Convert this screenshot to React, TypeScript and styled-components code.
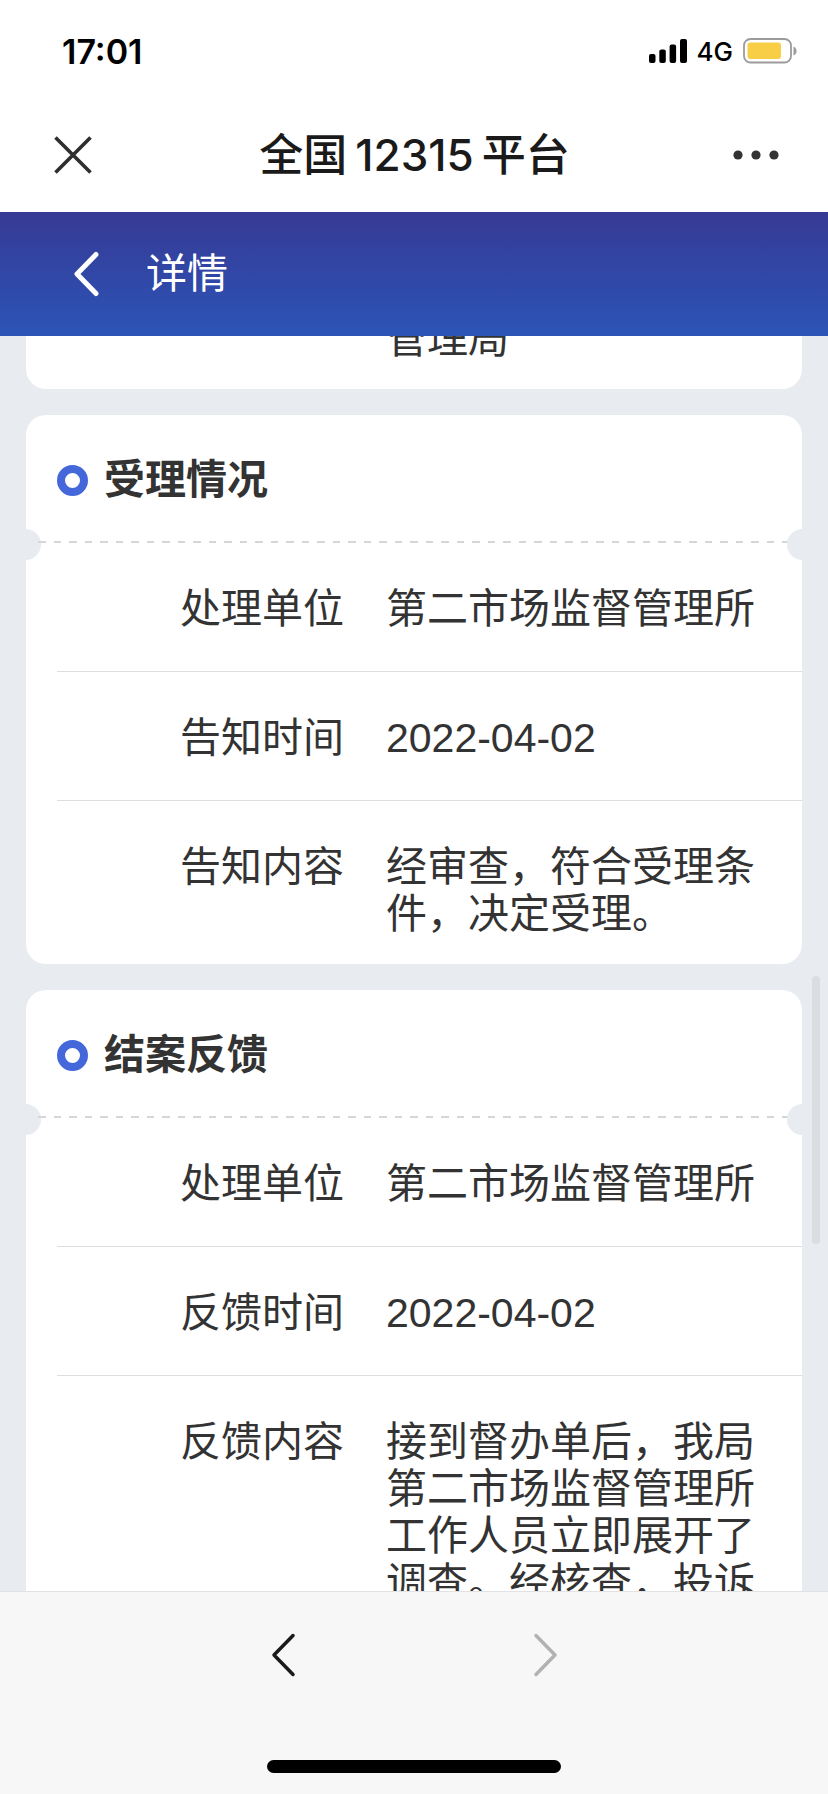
import React from "react";
import styled, { createGlobalStyle } from "styled-components";

const GlobalStyle = createGlobalStyle`
  *, *::before, *::after { box-sizing: border-box; }
  body {
    margin: 0;
    background: #e8ebf0;
    color: #333;
    font-family: "Liberation Sans", "Noto Sans CJK SC", sans-serif;
    font-size: 41px;
    line-height: 47px;
  }
  h1, h2, dl, dt, dd { margin: 0; font-size: inherit; }
`;

const Screen = styled.div`
  display: flex;
  flex-direction: column;
  height: 100vh;
`;

const StatusBar = styled.div`
  flex: none;
  display: flex;
  align-items: center;
  justify-content: space-between;
  height: 98px;
  padding: 4px 31px 0 62px;
  background: #fff;
  color: #000;
  font-family: Inter, sans-serif;
`;

const Clock = styled.time`
  font-size: 34px;
  font-weight: 600;
`;

const Indicators = styled.div`
  display: flex;
  align-items: center;
  gap: 10px;
  font-size: 26px;
  font-weight: 500;
`;

const AppBar = styled.header`
  flex: none;
  display: flex;
  align-items: center;
  justify-content: space-between;
  height: 114px;
  padding: 0 32px 0 33px;
  background: #fff;
`;

const AppTitle = styled.h1`
  display: flex;
  gap: 8px;
  color: #1a1a1a;
  font-family: Inter, "Noto Sans CJK SC", sans-serif;
  font-size: 44px;
  font-weight: 500;
`;

const IconButton = styled.button`
  display: flex;
  align-items: center;
  justify-content: center;
  width: 80px;
  height: 80px;
  padding: 0;
  border: 0;
  background: none;
`;

const PageBar = styled.div`
  flex: none;
  display: flex;
  align-items: center;
  gap: 20px;
  height: 124px;
  padding: 0 46px;
  background: linear-gradient(#373a95, #2b54b7);
  color: #fff;
`;

const PageTitle = styled.h2`
  font-weight: 400;
`;

const Viewport = styled.main`
  position: relative;
  flex: 1;
  min-height: 0;
  overflow: hidden;
`;

const Feed = styled.div`
  display: flex;
  flex-direction: column;
  gap: 26px;
  margin-top: -63px;
  padding: 0 26px;
`;

const Card = styled.section`
  padding-bottom: 26px;
  border-radius: 20px;
  background: #fff;
`;

const CardHeader = styled.header`
  position: relative;
  display: flex;
  align-items: center;
  gap: 16px;
  height: 128px;
  padding: 2px 31px 0;

  &::before, &::after {
    content: "";
    position: absolute;
    bottom: -17px;
    width: 31px;
    height: 31px;
    border-radius: 50%;
    background: #e8ebf0;
  }
  &::before { left: -16px; }
  &::after { right: -16px; }
`;

const Perforation = styled.span`
  position: absolute;
  right: 12px;
  bottom: 0;
  left: 12px;
  height: 2px;
  background: repeating-linear-gradient(
    90deg,
    #d3d7db 0 8px, transparent 8px 16px,
    #d3d7db 16px 23px, transparent 23px 31px
  );
`;

const Ring = styled.span`
  width: 31px;
  height: 31px;
  border: 8px solid #4468da;
  border-radius: 50%;
`;

const CardTitle = styled.h2`
  font-weight: 700;
`;

const Fields = styled.dl`
  margin-left: 31px;
`;

const Row = styled.div`
  display: grid;
  grid-template-columns: 287px 1fr;
  gap: 42px;
  padding: 43px 40px 0 0;

  &:not(:last-child) {
    padding-bottom: 38px;
    border-bottom: 1px solid #dcdee0;
  }
`;

const Label = styled.dt`
  text-align: right;
`;

const Value = styled.dd`
  min-width: 0;
`;

const ScrollThumb = styled.div`
  position: absolute;
  top: 51%;
  right: 8px;
  width: 8px;
  height: 268px;
  border-radius: 4px;
  background: #dcdde0;
`;

const BottomBar = styled.footer`
  flex: none;
  display: flex;
  flex-direction: column;
  align-items: center;
  gap: 65px;
  padding: 23px 0 21px;
  border-top: 1px solid #e2e2e4;
  background: #f7f7f7;
`;

const History = styled.nav`
  display: flex;
  gap: 182px;
`;

const HomeIndicator = styled.div`
  width: 294px;
  height: 13px;
  border-radius: 7px;
  background: #000;
`;

type Field = { label: string; value: string };

function Chevron({ color, width, flip }: { color: string; width: number; flip?: boolean }) {
  return (
    <svg width="26" height="46" viewBox="0 0 26 46" fill="none" stroke={color} strokeWidth={width} strokeLinecap="round" strokeLinejoin="round" aria-hidden="true">
      <path d={flip ? "M4 3.5 23 23 4 42.5" : "M23 3.5 4 23l19 19.5"} />
    </svg>
  );
}

function DetailCard({ title, fields }: { title?: string; fields: Field[] }) {
  return (
    <Card>
      {title && (
        <CardHeader>
          <Ring />
          <CardTitle>{title}</CardTitle>
          <Perforation />
        </CardHeader>
      )}
      <Fields>
        {fields.map((f) => (
          <Row key={f.value}>
            <Label>{f.label}</Label>
            <Value>{f.value}</Value>
          </Row>
        ))}
      </Fields>
    </Card>
  );
}

export default function App() {
  return (
    <Screen>
      <GlobalStyle />
      <StatusBar>
        <Clock>17:01</Clock>
        <Indicators>
          <svg width="38" height="24" viewBox="0 0 38 24" aria-hidden="true">
            <rect x="0" y="15" width="6.5" height="9" rx="2" />
            <rect x="10.3" y="10.5" width="6.5" height="13.5" rx="2" />
            <rect x="20.6" y="5.5" width="6.5" height="18.5" rx="2" />
            <rect x="31" y="0" width="7" height="24" rx="2" />
          </svg>
          <span>4G</span>
          <svg width="54" height="26" viewBox="0 0 54 26" aria-hidden="true">
            <rect x="1" y="1" width="47" height="23.5" rx="6.5" fill="none" stroke="#9b9b9b" strokeWidth="1.8" />
            <rect x="4.5" y="4.5" width="33.5" height="16.5" rx="3" fill="#f7ce46" />
            <path d="M50.5 8.5c4 1.5 4 7.5 0 9z" fill="#9b9b9b" />
          </svg>
        </Indicators>
      </StatusBar>
      <AppBar>
        <IconButton aria-label="关闭">
          <svg width="38" height="38" viewBox="0 0 38 38" stroke="#2e2e2e" strokeWidth="3.6" aria-hidden="true">
            <path d="M1.5 1.5 36.5 36.5M36.5 1.5 1.5 36.5" />
          </svg>
        </IconButton>
        <AppTitle>
          <span>全国</span>
          <span>12315</span>
          <span>平台</span>
        </AppTitle>
        <IconButton aria-label="更多">
          <svg width="46" height="10" viewBox="0 0 46 10" fill="#333" aria-hidden="true">
            <circle cx="5" cy="5" r="4.6" />
            <circle cx="23" cy="5" r="4.6" />
            <circle cx="41" cy="5" r="4.6" />
          </svg>
        </IconButton>
      </AppBar>
      <PageBar>
        <IconButton aria-label="返回">
          <Chevron color="#fff" width={5} />
        </IconButton>
        <PageTitle>详情</PageTitle>
      </PageBar>
      <Viewport>
        <Feed>
          <DetailCard fields={[{ label: "", value: "管理局" }]} />
          <DetailCard
            title="受理情况"
            fields={[
              { label: "处理单位", value: "第二市场监督管理所" },
              { label: "告知时间", value: "2022-04-02" },
              { label: "告知内容", value: "经审查，符合受理条件，决定受理。" },
            ]}
          />
          <DetailCard
            title="结案反馈"
            fields={[
              { label: "处理单位", value: "第二市场监督管理所" },
              { label: "反馈时间", value: "2022-04-02" },
              {
                label: "反馈内容",
                value: "接到督办单后，我局第二市场监督管理所工作人员立即展开了调查。经核查，投诉",
              },
            ]}
          />
        </Feed>
        <ScrollThumb />
      </Viewport>
      <BottomBar>
        <History>
          <IconButton aria-label="后退">
            <Chevron color="#1a1a1a" width={3.5} />
          </IconButton>
          <IconButton aria-label="前进" disabled>
            <Chevron color="#b2b2b2" width={3.5} flip />
          </IconButton>
        </History>
        <HomeIndicator />
      </BottomBar>
    </Screen>
  );
}
